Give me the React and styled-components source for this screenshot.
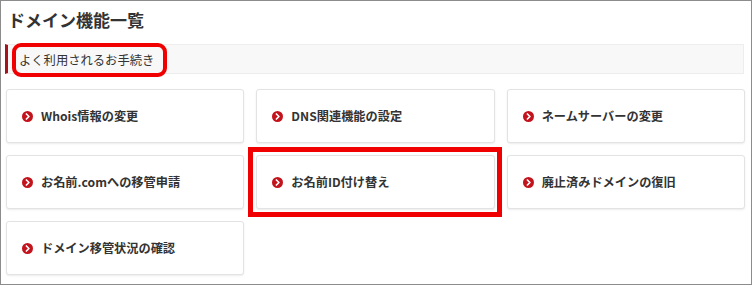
import React from "react";
import styled, { createGlobalStyle } from "styled-components";

const GlobalStyle = createGlobalStyle`
  html, body {
    margin: 0;
    padding: 0;
    background: #fff;
  }
  * {
    box-sizing: border-box;
  }
  body {
    font-family: "Noto Sans CJK JP", "Noto Sans", sans-serif;
    color: #333;
  }
`;

const items = [
  { label: "Whois情報の変更" },
  { label: "DNS関連機能の設定" },
  { label: "ネームサーバーの変更" },
  { label: "お名前.comへの移管申請" },
  { label: "お名前ID付け替え", marked: true },
  { label: "廃止済みドメインの復旧" },
  { label: "ドメイン移管状況の確認" },
];

const ArrowIcon = () => (
  <svg width="11" height="11" viewBox="0 0 11 11">
    <circle cx="5.5" cy="5.5" r="5.5" fill="#c3131c" />
    <path
      d="M4.4 3 L6.9 5.5 L4.4 8"
      fill="none"
      stroke="#fff"
      strokeWidth="1.7"
      strokeLinecap="round"
      strokeLinejoin="round"
    />
  </svg>
);

const App = () => {
  return (
    <>
      <GlobalStyle />
      <Frame>
        <Title>ドメイン機能一覧</Title>
        <Band>
          <BandLabel>
            よく利用されるお手続き
            <RoundMark />
          </BandLabel>
        </Band>
        <CardGrid>
          {items.map((item) => (
            <Card key={item.label} $marked={item.marked}>
              <ArrowIcon />
              <CardLabel>{item.label}</CardLabel>
            </Card>
          ))}
        </CardGrid>
      </Frame>
    </>
  );
};

const Frame = styled.div`
  width: 752px;
  height: 285px;
  border: 1px solid #8c8c8c;
  background: #fff;
  overflow: hidden;
`;

const Title = styled.h1`
  margin: 0;
  padding: 7px 0 0 7px;
  font-size: 17px;
  line-height: 24px;
  font-weight: bold;
  color: #333;
`;

const Band = styled.div`
  margin: 12px 7px 0 4px;
  height: 30px;
  display: flex;
  align-items: center;
  background: #f8f8f8;
  border: 1px solid #ededed;
  border-left: 3px solid #a5141c;
  padding-left: 11px;
`;

const BandLabel = styled.span`
  position: relative;
  font-size: 12.3px;
  line-height: 18px;
  color: #333;
  margin-top: 2px;
`;

const RoundMark = styled.span`
  position: absolute;
  left: -7px;
  right: -13px;
  top: -8px;
  bottom: -8px;
  border: 4px solid #f00000;
  border-radius: 9px;
  pointer-events: none;
`;

const CardGrid = styled.div`
  margin: 15px 6px 0 5px;
  display: grid;
  grid-template-columns: repeat(3, 1fr);
  grid-auto-rows: 54px;
  column-gap: 12px;
  row-gap: 12px;
`;

const Card = styled.div`
  position: relative;
  display: flex;
  align-items: center;
  gap: 8px;
  padding-left: 15px;
  background: #fff;
  border: 1px solid #e3e3e3;
  border-radius: 3px;
  box-shadow: 0 1px 2px rgba(0, 0, 0, 0.08);

  &::after {
    content: "";
    display: ${(p) => (p.$marked ? "block" : "none")};
    position: absolute;
    left: -9px;
    right: -8px;
    top: -9px;
    bottom: -9px;
    border: 5px solid #f00000;
  }
`;

const CardLabel = styled.span`
  font-size: 12.2px;
  font-weight: bold;
  color: #333;
  line-height: 18px;
`;

export default App;
